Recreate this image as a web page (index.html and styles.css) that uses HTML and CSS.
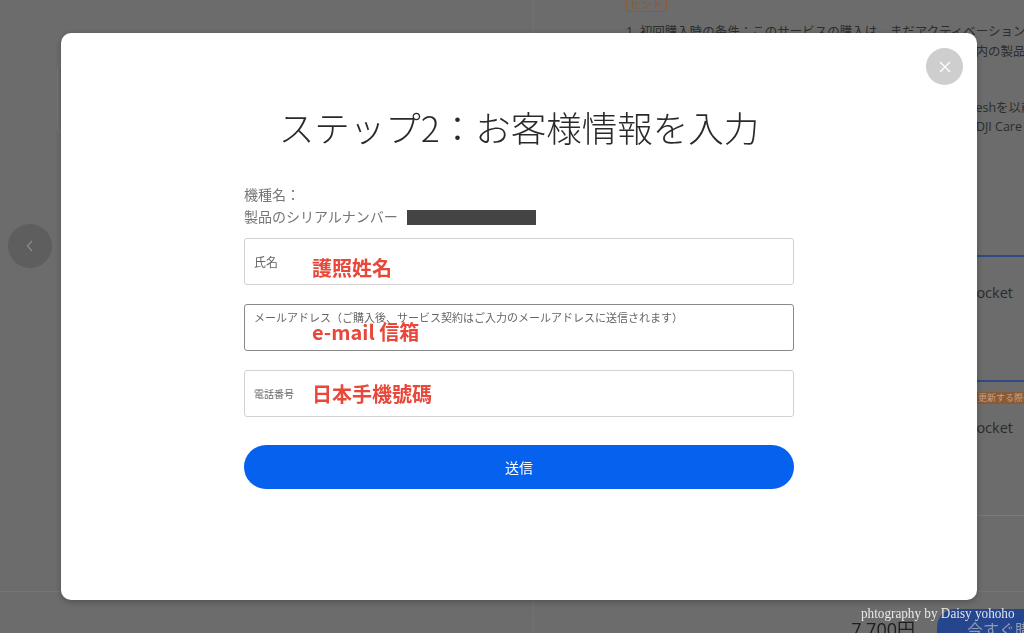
FILE: index.html
```html
<!DOCTYPE html>
<html lang="ja">
<head>
    <meta charset="UTF-8">
    <meta name="viewport" content="width=device-width, initial-scale=1.0">
    <title>DJI Care Refresh - お客様情報</title>
    <link rel="stylesheet" href="styles.css">
</head>
<body>
    <!-- page behind the dialog (already dimmed) -->
    <div class="page">
        <div class="gallery">
            <div class="gallery-card"></div>
            <button class="prev-btn" aria-label="前へ">
                <svg width="8" height="12" viewBox="0 0 8 12"><polyline points="6,1 1.5,6 6,11" fill="none" stroke="#8c8c8c" stroke-width="1.2"/></svg>
            </button>
        </div>
        <div class="details">
            <span class="hint-tag">ヒント</span>
            <div class="notes">
                <p class="note-line">1. 初回購入時の条件：このサービスの購入は、まだアクティベーション</p>
                <p class="note-line note-line--indent">されていない製品、またはアクティベーションした後二日以内の製品</p>
            </div>
            <div class="notes notes--second">
                <p class="note-line">2. 更新時の条件：既にご購入済みの製品で、有効期限内のRefreshを以前に購入</p>
                <p class="note-line note-line--indent">ご購入いただいた製品のみが対象となります。また、既存のDJI Care Refresh</p>
            </div>
            <div class="plans">
                <div class="plan">
                    <div class="plan-name">DJI Care Refresh 1年版 Osmo Pocket</div>
                </div>
                <div class="plan plan--renew">
                    <span class="plan-badge">更新する際の割引</span>
                    <div class="plan-name">DJI Care Refresh 更新版 Osmo Pocket</div>
                </div>
            </div>
        </div>
    </div>

    <div class="buy-bar">
        <span class="price">7,700円</span>
        <button class="buy-btn">今すぐ購入</button>
    </div>
    <div class="watermark">phtography by Daisy yohoho</div>

    <div class="modal">
        <button class="modal-close" aria-label="閉じる">
            <svg width="12" height="12" viewBox="0 0 12 12"><path d="M1 1 L11 11 M11 1 L1 11" stroke="#fff" stroke-width="1.4"/></svg>
        </button>
        <h2 class="modal-title">ステップ2：お客様情報を入力</h2>
        <form class="customer-form">
            <div class="product-info">
                <div>機種名：</div>
                <div>製品のシリアルナンバー<span class="serial-mask"></span></div>
            </div>
            <label class="field field--name">
                <span class="field-label">氏名</span>
                <span class="field-note">護照姓名</span>
            </label>
            <label class="field field--mail">
                <span class="field-label">メールアドレス（ご購入後、サービス契約はご入力のメールアドレスに送信されます）</span>
                <span class="field-note">e-mail 信箱</span>
            </label>
            <label class="field field--tel">
                <span class="field-label">電話番号</span>
                <span class="field-note">日本手機號碼</span>
            </label>
            <button class="submit-btn" type="button">送信</button>
        </form>
    </div>
</body>
</html>
```

FILE: styles.css
```css
body {
    margin: 0;
    width: 1024px;
    height: 633px;
    overflow: hidden;
    position: relative;
    background-color: #6b6c6b;
    font-family: "Open Sans", "Noto Sans CJK JP", sans-serif;
    color: #2d2d2d;
}

p {
    margin: 0;
}

button {
    font-family: inherit;
    border: none;
    padding: 0;
    cursor: pointer;
}

/* ---------- dimmed page ---------- */

.page {
    display: grid;
    grid-template-columns: 534px 1fr;
    height: 633px;
}

.gallery {
    position: relative;
    border-right: 1px solid #707170;
}

.gallery-card {
    margin: 62px 0 0 57px;
    width: 420px;
    height: 71px;
    border: 1px solid #797a79;
    border-radius: 8px;
}

.prev-btn {
    position: absolute;
    left: 8px;
    top: 224px;
    width: 44px;
    height: 44px;
    border-radius: 50%;
    background-color: #5d5e5d;
    display: flex;
    align-items: center;
    justify-content: center;
}

.details {
    padding-left: 92px;
    overflow: hidden;
}

.hint-tag {
    display: block;
    width: fit-content;
    margin-top: -3px;
    padding: 0 3px;
    border: 1px solid #8d5c36;
    border-radius: 3px;
    color: #8d5c36;
    font-size: 11px;
    line-height: 13px;
}

.notes {
    margin-top: 10px;
}

.note-line {
    font-size: 12.5px;
    line-height: 20px;
    white-space: nowrap;
}

.note-line--indent {
    padding-left: 14px;
}

.notes--second {
    margin-top: 36px;
}

.notes--second .note-line {
    line-height: 19px;
}

.plans {
    margin-top: 119px;
    border-bottom: 1px solid #7a7b7a;
}

.plan {
    box-sizing: border-box;
    height: 125px;
    border-top: 2px solid #2e4b86;
    padding-top: 25px;
}

.plan--renew {
    height: 135px;
    padding-top: 10px;
}

.plan-name {
    text-align: right;
    padding-right: 11px;
    font-size: 14.5px;
    line-height: 22px;
    color: #2b2b2b;
    white-space: nowrap;
}

.plan-badge {
    display: block;
    width: fit-content;
    margin-left: 349px;
    padding: 0 6px 0 3px;
    background-color: #8b5a32;
    color: #c3a48c;
    font-size: 9px;
    line-height: 12px;
    white-space: nowrap;
}

.plan--renew .plan-name {
    margin-top: 13px;
}

.buy-bar {
    position: fixed;
    left: 0;
    right: 0;
    bottom: 0;
    height: 41px;
    border-top: 1px solid #737473;
    display: flex;
    justify-content: flex-end;
    align-items: flex-start;
    gap: 22px;
    overflow: hidden;
}

.price {
    margin-top: 26px;
    font-size: 18px;
    line-height: 22px;
    color: #1e1e1e;
}

.buy-btn {
    margin-top: 17px;
    margin-right: -23px;
    width: 110px;
    height: 40px;
    border-radius: 18px;
    background-color: #25468d;
    color: #8e9bb7;
    font-size: 16px;
    text-align: left;
    padding-left: 30px;
    white-space: nowrap;
}

.watermark {
    position: absolute;
    right: 9px;
    top: 605px;
    font-family: "Liberation Serif", serif;
    font-size: 15px;
    color: rgba(255, 255, 255, 0.85);
    transform: scaleX(0.88);
    transform-origin: right center;
    white-space: nowrap;
}

/* ---------- dialog ---------- */

.modal {
    position: absolute;
    left: 61px;
    top: 33px;
    width: 916px;
    height: 567px;
    box-sizing: border-box;
    padding-top: 72px;
    background-color: #fff;
    border-radius: 10px;
    box-shadow: 0 2px 6px rgba(0, 0, 0, 0.25);
    font-family: "Noto Sans CJK JP", sans-serif;
}

.modal-close {
    position: absolute;
    top: 15px;
    right: 14px;
    width: 37px;
    height: 37px;
    border-radius: 50%;
    background-color: #cecece;
    display: flex;
    align-items: center;
    justify-content: center;
}

.modal-title {
    margin: 0;
    text-align: center;
    font-size: 35.5px;
    line-height: 44px;
    font-weight: 300;
    color: #2a2a2a;
}

.customer-form {
    width: 550px;
    margin: 34px auto 0;
}

.product-info {
    font-size: 14px;
    line-height: 22px;
    color: #767676;
}

.serial-mask {
    display: inline-block;
    width: 129px;
    height: 15px;
    margin-left: 9px;
    vertical-align: -3px;
    background-color: #444;
}

.field {
    box-sizing: border-box;
    height: 47px;
    margin-top: 19px;
    padding-left: 9px;
    border: 1px solid #d2d2d2;
    border-radius: 3px;
    display: flex;
    align-items: center;
}

.field--name {
    margin-top: 11px;
}

.field-label {
    flex-shrink: 0;
    width: 58px;
    font-size: 12px;
    color: #666;
}

.field-note {
    font-family: "Noto Sans CJK TC", sans-serif;
    font-weight: 700;
    font-size: 20px;
    line-height: 24px;
    color: #e8473a;
}

.field--name .field-note {
    margin-top: 12px;
}

.field--mail {
    display: block;
    padding-top: 6px;
    border-color: #8a8a8a;
}

.field--mail .field-label {
    display: block;
    width: auto;
    font-size: 11px;
    line-height: 12px;
}

.field--mail .field-note {
    display: block;
    padding-left: 58px;
    line-height: 18px;
}

.field--tel .field-label {
    font-size: 10px;
}

.submit-btn {
    display: block;
    width: 100%;
    height: 44px;
    margin-top: 28px;
    border-radius: 22px;
    background-color: #0661ee;
    color: #fff;
    font-size: 14px;
}
```
